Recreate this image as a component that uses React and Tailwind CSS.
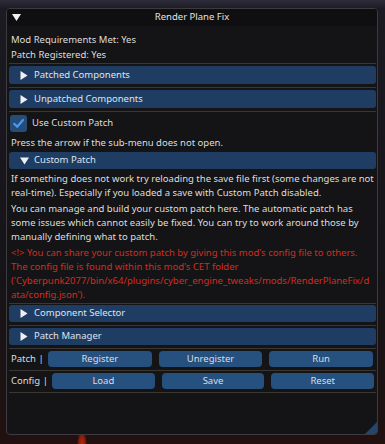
import React from "react";

const font = { fontFamily: '"Noto Sans", "Open Sans", sans-serif' };

function Sep({ mt }) {
  return <div className={`h-px bg-[#3a3733] ${mt}`} />;
}

function Header({ title, open, mt, h = "h-[18px]" }) {
  return (
    <div className={`${h} ${mt} rounded-[3px] bg-[#1f3d63] flex items-center text-[#dfe3ea]`}>
      <div className="w-[24px] flex justify-center pl-[6px]">
        {open ? (
          <svg width="9" height="8" viewBox="0 0 9 8">
            <polygon points="0,0.5 9,0.5 4.5,7.5" fill="#eef0f3" />
          </svg>
        ) : (
          <svg width="8" height="9" viewBox="0 0 8 9">
            <polygon points="0.5,0 7.5,4.5 0.5,9" fill="#eef0f3" />
          </svg>
        )}
      </div>
      <span className="ml-[1px]">{title}</span>
    </div>
  );
}

function Btn({ children }) {
  return (
    <div className="flex-1 h-[16px] rounded-[4px] bg-[#26507e] flex items-center justify-center text-[#d9dee6]">
      {children}
    </div>
  );
}

function Line({ children }) {
  return <div className="h-[14px] leading-[14px] whitespace-nowrap">{children}</div>;
}

export default function App() {
  return (
    <div
      style={font}
      className="w-[385px] h-[444px] overflow-hidden text-[9.5px] text-[#dedede] bg-[radial-gradient(ellipse_5px_14px_at_82px_444px,#b8290f_0%,#8a1c0b_60%,transparent_100%),linear-gradient(to_bottom,#2d2c3b_0px,#27263300_9px),linear-gradient(to_bottom,#1c1a22_0px,#161418_60%,#1d1212_90%,#231010_100%)] pt-[8px] pl-[6px]"
    >
      <div className="relative w-[372px] h-[427px] rounded-[4px] border border-[#3b3b40] bg-[#141416] flex flex-col overflow-hidden">
        {/* title bar */}
        <div className="h-[17px] bg-[#0f0f11] grid grid-cols-[1fr_auto_1fr] items-center">
          <div className="pl-[5px] flex items-center">
            <svg width="9" height="7" viewBox="0 0 9 7">
              <polygon points="0,0 9,0 4.5,7" fill="#f2f2f2" />
            </svg>
          </div>
          <div className="text-[#e2e2e2]">Render Plane Fix</div>
          <div />
        </div>

        <div className="flex flex-col pl-[2px] pr-[1px]">
          <div className="mt-[6px] h-[15px] leading-[15px] pl-[2px]">Mod Requirements Met: Yes</div>
          <div className="h-[15px] leading-[15px] pl-[2px]">Patch Registered: Yes</div>
          <Sep mt="mt-[1px]" />
          <Header title="Patched Components" mt="mt-[2px]" />
          <Sep mt="mt-[3px]" />
          <Header title="Unpatched Components" mt="mt-[2px]" />
          <Sep mt="mt-[3px]" />

          <div className="mt-[3px] h-[17px] flex items-center">
            <div className="ml-[1px] w-[17px] h-[17px] rounded-[3px] bg-[#264c78] flex items-center justify-center">
              <svg width="13" height="13" viewBox="0 0 13 13">
                <path d="M2.2 6.8 L5.2 9.8 L11 3" stroke="#4a9af0" strokeWidth="2.2" fill="none" strokeLinecap="round" strokeLinejoin="round" />
              </svg>
            </div>
            <span className="ml-[5px]">Use Custom Patch</span>
          </div>

          <div className="mt-[3px] h-[15px] leading-[15px] pl-[2px]">Press the arrow if the sub-menu does not open.</div>
          <Header title="Custom Patch" open mt="mt-[2px]" h="h-[17px]" />

          <div className="mt-[3px] pl-[2px]">
            <Line>If something does not work try reloading the save file first (some changes are not</Line>
            <Line>real-time). Especially if you loaded a save with Custom Patch disabled.</Line>
          </div>
          <div className="mt-[2px] pl-[2px]">
            <Line>You can manage and build your custom patch here. The automatic patch has</Line>
            <Line>some issues which cannot easily be fixed. You can try to work around those by</Line>
            <Line>manually defining what to patch.</Line>
          </div>
          <div className="mt-[2px] pl-[2px] text-[#d42b1f]">
            <Line>&lt;!&gt; You can share your custom patch by giving this mod's config file to others.</Line>
            <Line>The config file is found within this mod's CET folder</Line>
            <Line>('Cyberpunk2077/bin/x64/plugins/cyber_engine_tweaks/mods/RenderPlaneFix/d</Line>
            <Line>ata/config.json').</Line>
          </div>

          <Sep mt="mt-[1px]" />
          <Header title="Component Selector" mt="mt-[1px]" h="h-[17px]" />
          <Sep mt="mt-[3px]" />
          <Header title="Patch Manager" mt="mt-[2px]" h="h-[17px]" />
          <Sep mt="mt-[3px]" />

          <div className="mt-[2px] h-[16px] flex items-center pr-[3px]">
            <div className="w-[39px] pl-[2px]">Patch |</div>
            <div className="flex-1 flex gap-[7px]">
              <Btn>Register</Btn>
              <Btn>Unregister</Btn>
              <Btn>Run</Btn>
            </div>
          </div>
          <Sep mt="mt-[3px]" />
          <div className="mt-[2px] h-[16px] flex items-center pr-[2px]">
            <div className="w-[43px] pl-[2px]">Config |</div>
            <div className="flex-1 flex gap-[7px]">
              <Btn>Load</Btn>
              <Btn>Save</Btn>
              <Btn>Reset</Btn>
            </div>
          </div>
          <Sep mt="mt-[3px]" />
        </div>

        {/* resize grip */}
        <svg className="absolute right-0 bottom-0" width="12" height="12" viewBox="0 0 12 12">
          <polygon points="12,0 12,12 0,12" fill="#24456c" />
        </svg>
      </div>
    </div>
  );
}
